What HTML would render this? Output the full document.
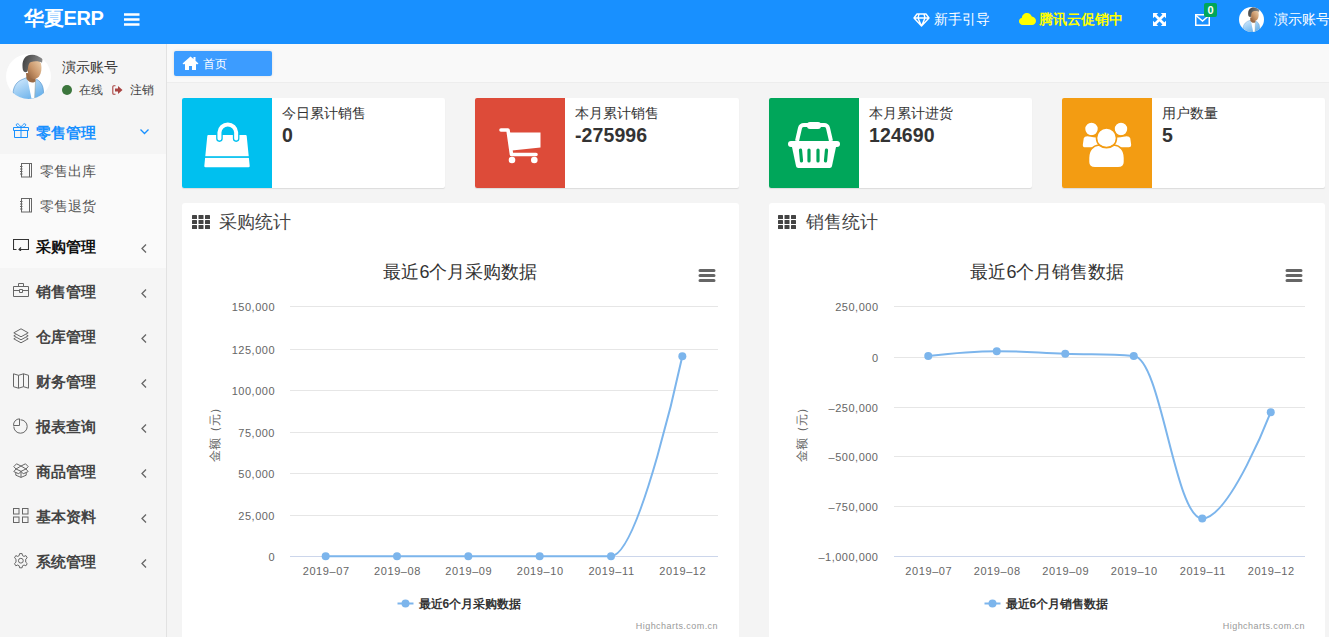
<!DOCTYPE html>
<html><head><meta charset="utf-8">
<style>
*{margin:0;padding:0;box-sizing:border-box}
html,body{width:1329px;height:637px;overflow:hidden;background:#f4f4f4;font-family:"Liberation Sans",sans-serif;color:#333}
.abs{position:absolute}
#hdr{position:absolute;left:0;top:0;width:1329px;height:44px;background:#1890ff}
#side{position:absolute;left:0;top:44px;width:167px;height:593px;background:#f5f5f5;border-right:1px solid #e2e2e2}
#tabs{position:absolute;left:167px;top:44px;width:1162px;height:39px;background:#f9f9f9;border-bottom:1px solid #ededed}
.txt{position:absolute;white-space:nowrap;line-height:1}
.box{position:absolute;top:98px;width:263px;height:90px;background:#fff;border-radius:2px;box-shadow:0 1px 1px rgba(0,0,0,0.1);overflow:hidden}
.box .ic{position:absolute;left:0;top:0;width:90px;height:90px}
.box .t{position:absolute;left:100px;top:106px;font-size:14px}
.panel{position:absolute;top:203px;background:#fff;border-radius:3px;height:440px}
svg text{font-family:"Liberation Sans",sans-serif}
.ay{font-size:11px;fill:#666;letter-spacing:0.5px}
.axx{font-size:11px;fill:#666;letter-spacing:0.6px}
.at{font-size:12px;fill:#666}
.ct{font-size:18px;fill:#333}
.lg{font-size:12px;font-weight:bold;fill:#333}
.cr{font-size:9px;fill:#999;letter-spacing:0.45px}
.mi{position:absolute;left:0;width:166px;height:45px}
.mi .lab{position:absolute;left:36px;top:16px;font-size:15px;font-weight:bold;color:#444;line-height:1;white-space:nowrap}
.mi span{line-height:0}
.mi .chev{position:absolute;left:141px;top:21px}
</style></head><body>
<div id="hdr">
  <div class="txt" style="left:24px;top:8px;font-size:20px;font-weight:bold;color:#fff;letter-spacing:-0.3px">华夏ERP</div>
  <svg class="abs" style="left:124px;top:13px" width="16" height="14"><path d="M0 1.5H15.5M0 6.5H15.5M0 11.5H15.5" stroke="#fff" stroke-width="2.5"/></svg>
  <svg class="abs" style="left:913px;top:13px" width="17" height="14" viewBox="0 0 17 14"><path d="M4 1H13L16 5L8.5 13L1 5Z M1 5H16 M6 1L5 5L8.5 13L12 5L11 1" fill="none" stroke="#fff" stroke-width="1.4" stroke-linejoin="round"/></svg>
  <div class="txt" style="left:934px;top:12px;font-size:14px;color:#fff">新手引导</div>
  <svg class="abs" style="left:1019px;top:12px" width="17" height="13" viewBox="0 0 17 13"><path d="M4 13C1.5 13 0 11.2 0 9.3C0 7.6 1.2 6.2 2.8 6C3 3 5.3 1 8 1C10.3 1 12.2 2.5 12.8 4.6C15.2 4.8 17 6.7 17 9C17 11.2 15.3 13 13 13Z" fill="#ffff00"/></svg>
  <div class="txt" style="left:1039px;top:12px;font-size:14px;font-weight:bold;color:#ffff00">腾讯云促销中</div>
  <svg class="abs" style="left:1153px;top:13px" width="13" height="13" viewBox="0 0 13 13"><path d="M0 0H5.2L0 5.2Z M13 0V5.2L7.8 0Z M0 13V7.8L5.2 13Z M13 13H7.8L13 7.8Z" fill="#fff"/><path d="M1.5 1.5L11.5 11.5M11.5 1.5L1.5 11.5" stroke="#fff" stroke-width="2.6"/></svg>
  <svg class="abs" style="left:1195px;top:13px" width="15" height="13" viewBox="0 0 15 13"><rect x="0.75" y="1.75" width="13.5" height="10.5" fill="none" stroke="#fff" stroke-width="1.5"/><path d="M1 2.5L7.5 8L14 2.5" fill="none" stroke="#fff" stroke-width="1.5"/></svg>
  <div class="abs" style="left:1204px;top:3px;width:13px;height:14px;background:#00a65a;border-radius:2px;color:#fff;font-size:11px;font-weight:bold;text-align:center;line-height:14px">0</div>
  <div class="abs" style="left:1239px;top:7px;width:25px;height:25px;border-radius:50%;background:#fff;overflow:hidden"><svg width="25" height="25" viewBox="0 0 45 45"><defs><linearGradient id="sh25" x1="0.2" y1="0.1" x2="0.8" y2="1"><stop offset="0" stop-color="#c8e4fb"/><stop offset="1" stop-color="#62ade9"/></linearGradient><linearGradient id="fc25" x1="1" y1="0" x2="0" y2="1"><stop offset="0" stop-color="#f0d3b0"/><stop offset="0.55" stop-color="#c9966a"/><stop offset="1" stop-color="#8d5d3a"/></linearGradient><linearGradient id="hr25" x1="0" y1="0" x2="1" y2="0.3"><stop offset="0" stop-color="#3a3a3a"/><stop offset="1" stop-color="#8a8a8a"/></linearGradient></defs><path d="M7 43C6.5 35 9 29 15 26L21 23.5L28 26.5L31 25.5C35.5 28 38 33 37.5 41C33 44 27 45.5 22 45.5C16 45.5 10 44.5 7 43Z" fill="url(#sh25)" stroke="#4f8fc8" stroke-width="0.6"/><path d="M21.5 25L29.5 26.5L28.6 44.8L25.5 44.8Z" fill="#fff"/><path d="M29.5 27L28.7 44.8" stroke="#9aa" stroke-width="0.7"/><path d="M20 19L29 19.5L29.6 27C27.5 29.5 23.5 29 20.5 25Z" fill="#9a6a45"/><ellipse cx="20.4" cy="14.5" rx="1.9" ry="2.6" fill="#b07a50"/><path d="M21.5 8C24 4.5 33 4.5 35 9.5C36 14 35.5 19 33 22.5C31 25 27 26 24.5 24C22 21.5 21 16 21.5 8Z" fill="url(#fc25)"/><path d="M16.8 15.5C15.8 9 17 3.2 22.5 1.2C28.5 -0.6 35 0.8 36.5 5.5L36 8.8C33.5 7 28.5 6.8 25 8C23 8.8 22.3 11 22 14L21.2 17.8C19 18.8 17.3 17.5 16.8 15.5Z" fill="url(#hr25)"/></svg></div>
  <div class="txt" style="left:1274px;top:12px;font-size:14px;color:#fff">演示账号</div>
</div>
<div id="side">
<div class="abs" style="left:6px;top:10px;width:45px;height:45px;border-radius:50%;background:#fff;overflow:hidden"><svg width="45" height="45" viewBox="0 0 45 45"><defs><linearGradient id="sh45" x1="0.2" y1="0.1" x2="0.8" y2="1"><stop offset="0" stop-color="#c8e4fb"/><stop offset="1" stop-color="#62ade9"/></linearGradient><linearGradient id="fc45" x1="1" y1="0" x2="0" y2="1"><stop offset="0" stop-color="#f0d3b0"/><stop offset="0.55" stop-color="#c9966a"/><stop offset="1" stop-color="#8d5d3a"/></linearGradient><linearGradient id="hr45" x1="0" y1="0" x2="1" y2="0.3"><stop offset="0" stop-color="#3a3a3a"/><stop offset="1" stop-color="#8a8a8a"/></linearGradient></defs><path d="M7 43C6.5 35 9 29 15 26L21 23.5L28 26.5L31 25.5C35.5 28 38 33 37.5 41C33 44 27 45.5 22 45.5C16 45.5 10 44.5 7 43Z" fill="url(#sh45)" stroke="#4f8fc8" stroke-width="0.6"/><path d="M21.5 25L29.5 26.5L28.6 44.8L25.5 44.8Z" fill="#fff"/><path d="M29.5 27L28.7 44.8" stroke="#9aa" stroke-width="0.7"/><path d="M20 19L29 19.5L29.6 27C27.5 29.5 23.5 29 20.5 25Z" fill="#9a6a45"/><ellipse cx="20.4" cy="14.5" rx="1.9" ry="2.6" fill="#b07a50"/><path d="M21.5 8C24 4.5 33 4.5 35 9.5C36 14 35.5 19 33 22.5C31 25 27 26 24.5 24C22 21.5 21 16 21.5 8Z" fill="url(#fc45)"/><path d="M16.8 15.5C15.8 9 17 3.2 22.5 1.2C28.5 -0.6 35 0.8 36.5 5.5L36 8.8C33.5 7 28.5 6.8 25 8C23 8.8 22.3 11 22 14L21.2 17.8C19 18.8 17.3 17.5 16.8 15.5Z" fill="url(#hr45)"/></svg></div>
<div class="txt" style="left:62px;top:16px;font-size:14px;color:#333">演示账号</div>
<div class="abs" style="left:62px;top:41px;width:10px;height:10px;border-radius:50%;background:#3c763d"></div>
<div class="txt" style="left:79px;top:40px;font-size:12px;color:#444">在线</div>
<svg class="abs" style="left:112px;top:41px" width="11" height="10" viewBox="0 0 11 10"><path d="M3.5 0.8H1.8Q0.8 0.8 0.8 1.8V8.2Q0.8 9.2 1.8 9.2H3.5" fill="none" stroke="#a94442" stroke-width="1.1"/><path d="M3 3.6H6V1L10.5 5L6 9V6.4H3Z" fill="#a94442"/></svg>
<div class="txt" style="left:130px;top:40px;font-size:12px;color:#444">注销</div>
<div class="mi" style="top:65px"><span style="position:absolute;left:13px;top:14px"><svg width="16" height="16" viewBox="0 0 16 16"><g fill="none" stroke="#1890ff" stroke-width="1"><path d="M0.5 4.5H15.5V7.5H0.5Z"/><path d="M1.5 7.5V14.5H14.5V7.5"/><path d="M8 4.5V14.5"/><path d="M8 4.5C6.5 1.5 4.5 0 3.5 1.2C2.6 2.4 4 4.2 8 4.5C12 4.2 13.4 2.4 12.5 1.2C11.5 0 9.5 1.5 8 4.5"/></g></svg></span><div class="lab" style="color:#1890ff;top:16px">零售管理</div><svg style="position:absolute;left:140px;top:20px" width="9" height="6" viewBox="0 0 9 6"><path d="M0.5 0.5L4.5 4.5L8.5 0.5" fill="none" stroke="#1890ff" stroke-width="1.3"/></svg></div>
<div class="abs" style="left:0;top:110px;width:166px;height:114px;background:#fafafa"></div>
<span class="abs" style="left:20px;top:119px"><svg width="12" height="15" viewBox="0 0 12 15"><g fill="none" stroke="#666" stroke-width="1"><rect x="1.5" y="0.5" width="10" height="13.5"/><path d="M9.5 0.5V14"/><path d="M0 3.5H2.5M0 6H2.5M0 8.5H2.5M0 11H2.5"/></g></svg></span><div class="txt" style="left:40px;top:120px;font-size:14px;color:#555">零售出库</div>
<span class="abs" style="left:20px;top:154px"><svg width="12" height="15" viewBox="0 0 12 15"><g fill="none" stroke="#666" stroke-width="1"><rect x="1.5" y="0.5" width="10" height="13.5"/><path d="M9.5 0.5V14"/><path d="M0 3.5H2.5M0 6H2.5M0 8.5H2.5M0 11H2.5"/></g></svg></span><div class="txt" style="left:40px;top:155px;font-size:14px;color:#555">零售退货</div>
<div class="mi" style="top:179px"><span style="position:absolute;left:13px;top:16px"><svg width="16" height="12" viewBox="0 0 16 12"><path d="M3.5 10.5H0.5V0.5H15.5V10.5H6M8 8.5L6 10.5L8 12" fill="none" stroke="#333" stroke-width="1.1"/></svg></span><div class="lab" style="color:#111">采购管理</div><svg class="chev" width="6" height="9" viewBox="0 0 6 9"><path d="M5 0.5L1 4.5L5 8.5" fill="none" stroke="#666" stroke-width="1.3"/></svg></div>
<div class="mi" style="top:224px"><span style="position:absolute;left:13px;top:15px"><svg width="16" height="15" viewBox="0 0 16 15"><g fill="none" stroke="#666" stroke-width="1"><path d="M0.5 3.5H15.5V13.5H0.5Z"/><path d="M5.5 3.5V0.5H10.5V3.5"/><path d="M0.5 7.5H6.5M9.5 7.5H15.5"/><path d="M6.5 6.5H9.5V9.5H6.5Z"/></g></svg></span><div class="lab" style="color:#444">销售管理</div><svg class="chev" width="6" height="9" viewBox="0 0 6 9"><path d="M5 0.5L1 4.5L5 8.5" fill="none" stroke="#666" stroke-width="1.3"/></svg></div>
<div class="mi" style="top:269px"><span style="position:absolute;left:13px;top:15px"><svg width="16" height="16" viewBox="0 0 16 16"><g fill="none" stroke="#666" stroke-width="1" stroke-linejoin="round"><path d="M8 0.8L15.2 4.8L8 8.8L0.8 4.8Z"/><path d="M2.6 6.8L0.8 7.8L8 11.8L15.2 7.8L13.4 6.8"/><path d="M2.6 9.8L0.8 10.8L8 14.8L15.2 10.8L13.4 9.8"/></g></svg></span><div class="lab" style="color:#444">仓库管理</div><svg class="chev" width="6" height="9" viewBox="0 0 6 9"><path d="M5 0.5L1 4.5L5 8.5" fill="none" stroke="#666" stroke-width="1.3"/></svg></div>
<div class="mi" style="top:314px"><span style="position:absolute;left:13px;top:15px"><svg width="16" height="16" viewBox="0 0 16 16"><g fill="none" stroke="#666" stroke-width="1" stroke-linejoin="round"><path d="M0.5 0.8L5.5 2.3L10.5 0.8L15.5 2.3V15.2L10.5 13.7L5.5 15.2L0.5 13.7Z"/><path d="M5.5 2.3V15.2M10.5 0.8V13.7"/></g></svg></span><div class="lab" style="color:#444">财务管理</div><svg class="chev" width="6" height="9" viewBox="0 0 6 9"><path d="M5 0.5L1 4.5L5 8.5" fill="none" stroke="#666" stroke-width="1.3"/></svg></div>
<div class="mi" style="top:359px"><span style="position:absolute;left:13px;top:15px"><svg width="16" height="16" viewBox="0 0 16 16"><g fill="none" stroke="#666" stroke-width="1"><path d="M7.5 1.8A6.7 6.7 0 1 1 0.8 8.5"/><path d="M6.5 0.8V7.5H0.5A6.3 6.3 0 0 1 6.5 0.8Z"/></g></svg></span><div class="lab" style="color:#444">报表查询</div><svg class="chev" width="6" height="9" viewBox="0 0 6 9"><path d="M5 0.5L1 4.5L5 8.5" fill="none" stroke="#666" stroke-width="1.3"/></svg></div>
<div class="mi" style="top:404px"><span style="position:absolute;left:13px;top:15px"><svg width="16" height="15" viewBox="0 0 16 15"><g fill="none" stroke="#666" stroke-width="1" stroke-linejoin="round"><path d="M8 3L3.5 0.8L0.8 3.6L3 6L0.8 8.6L5.8 10.8L8 8.3L10.2 10.8L15.2 8.6L13 6L15.2 3.6L12.5 0.8Z"/><path d="M3 6L8 8.3L13 6L8 3Z"/><path d="M2.8 9.6V12.2L8 14.4L13.2 12.2V9.6M8 8.3V14.4"/></g></svg></span><div class="lab" style="color:#444">商品管理</div><svg class="chev" width="6" height="9" viewBox="0 0 6 9"><path d="M5 0.5L1 4.5L5 8.5" fill="none" stroke="#666" stroke-width="1.3"/></svg></div>
<div class="mi" style="top:449px"><span style="position:absolute;left:13px;top:15px"><svg width="16" height="16" viewBox="0 0 16 16"><g fill="none" stroke="#666" stroke-width="1"><rect x="0.5" y="0.5" width="5.5" height="5.5"/><rect x="9.5" y="0.5" width="5.5" height="5.5"/><rect x="0.5" y="9" width="5.5" height="5.5"/><rect x="9.5" y="9" width="5.5" height="5.5"/></g></svg></span><div class="lab" style="color:#444">基本资料</div><svg class="chev" width="6" height="9" viewBox="0 0 6 9"><path d="M5 0.5L1 4.5L5 8.5" fill="none" stroke="#666" stroke-width="1.3"/></svg></div>
<div class="mi" style="top:494px"><span style="position:absolute;left:13px;top:15px"><svg width="16" height="16" viewBox="0 0 16 16"><g fill="none" stroke="#666" stroke-width="1" stroke-linejoin="round"><path d="M6.6 0.6H9.1L9.5 2.6L11 3.4L12.9 2.6L14.2 4.8L12.7 6.2V9.2L14.2 10.6L12.9 12.8L11 12L9.5 12.8L9.1 14.8H6.6L6.2 12.8L4.7 12L2.8 12.8L1.5 10.6L3 9.2V6.2L1.5 4.8L2.8 2.6L4.7 3.4L6.2 2.6Z"/><circle cx="7.85" cy="7.7" r="2.4"/></g></svg></span><div class="lab" style="color:#444">系统管理</div><svg class="chev" width="6" height="9" viewBox="0 0 6 9"><path d="M5 0.5L1 4.5L5 8.5" fill="none" stroke="#666" stroke-width="1.3"/></svg></div>
</div>
<div id="tabs">
  <div class="abs" style="left:7px;top:7px;width:98px;height:25px;background:#3c9cff;border-radius:2px;box-shadow:0 0 3px rgba(0,0,0,0.12)"></div>
  <svg class="abs" style="left:15px;top:12px" width="17" height="14" viewBox="0 0 17 14"><path d="M8.5 0.5L0.5 7.5L2 8.5L3 7.7V14H7V10H10V14H14V7.7L15 8.5L16.5 7.5L13.5 4.8V1H11.5V3L8.5 0.5Z" fill="#fff"/></svg>
  <div class="txt" style="left:36px;top:14px;font-size:12px;color:#fff">首页</div>
</div>
<div class="box" style="left:182px;width:263px"><div class="ic" style="background:#00c0ef"><span class="abs" style="left:21.5px;top:24px;line-height:0"><svg width="46" height="46" viewBox="0 0 46 46"><path d="M4.3 13H41.7Q42.6 13 42.7 14L45.7 44Q45.8 45.3 44.5 45.3H1.5Q0.2 45.3 0.3 44L3.3 14Q3.4 13 4.3 13Z" fill="#fff"/><rect x="0" y="34.2" width="46" height="1.7" fill="#00c0ef"/><path d="M15.45 16.6V10.36A8.36 8.36 0 0 1 32.15 10.36V16.6" fill="none" stroke="#00c0ef" stroke-width="6.6" stroke-linecap="round"/><path d="M15.45 16.6V10.36A8.36 8.36 0 0 1 32.15 10.36V16.6" fill="none" stroke="#fff" stroke-width="4" stroke-linecap="round"/></svg></span></div><div class="txt" style="left:100px;top:8px;font-size:14px;color:#333">今日累计销售</div><div class="txt" style="left:100px;top:28px;font-size:19.5px;letter-spacing:0.1px;font-weight:bold;color:#333">0</div></div>
<div class="box" style="left:475px;width:264px"><div class="ic" style="background:#dd4b39"><span class="abs" style="left:24px;top:30px;line-height:0"><svg width="42" height="36" viewBox="0 0 42 36"><path d="M2 2H9L12.5 26.5H37" fill="none" stroke="#fff" stroke-width="3.6" stroke-linecap="round" stroke-linejoin="round"/><path d="M10 4.5H41.5V19.5L13 22.5Z" fill="#fff"/><circle cx="13" cy="32" r="3.3" fill="#fff"/><circle cx="35.3" cy="32" r="3.3" fill="#fff"/></svg></span></div><div class="txt" style="left:100px;top:8px;font-size:14px;color:#333">本月累计销售</div><div class="txt" style="left:100px;top:28px;font-size:19.5px;letter-spacing:0.1px;font-weight:bold;color:#333">-275996</div></div>
<div class="box" style="left:769px;width:263px"><div class="ic" style="background:#00a65a"><span class="abs" style="left:19px;top:24px;line-height:0"><svg width="52" height="46" viewBox="0 0 52 46"><path d="M9 19L12 6C12.5 4 14 3 16 3H36C38 3 39.5 4 40 6L43 19" fill="none" stroke="#fff" stroke-width="4"/><rect x="19" y="0" width="14" height="7" rx="3" fill="#fff"/><rect x="0" y="19" width="52" height="6" rx="3" fill="#fff"/><path d="M4 25H48L44 44C43.7 45.3 43 46 41.5 46H10.5C9 46 8.3 45.3 8 44Z" fill="#fff"/><g stroke="#00a65a" stroke-width="3.2" stroke-linecap="round"><path d="M12.5 28L13.5 39M21 28V39M30 28V39M38.5 28L37.5 39"/></g></svg></span></div><div class="txt" style="left:100px;top:8px;font-size:14px;color:#333">本月累计进货</div><div class="txt" style="left:100px;top:28px;font-size:19.5px;letter-spacing:0.1px;font-weight:bold;color:#333">124690</div></div>
<div class="box" style="left:1062px;width:263px"><div class="ic" style="background:#f39c12"><span class="abs" style="left:20px;top:24px;line-height:0"><svg width="50" height="46" viewBox="0 0 50 46"><g fill="#fff" stroke="#f39c12" stroke-width="1.6"><circle cx="9.5" cy="7" r="7"/><circle cx="39" cy="7" r="7"/><path d="M1 16C2 13 5 13 9 14C12 15 16 15 20 14V26H3C1 26 0 25 0 23Z"/><path d="M49 16C48 13 45 13 41 14C38 15 34 15 30 14V26H47C49 26 50 25 50 23Z"/><circle cx="24.5" cy="16" r="10"/><path d="M6.5 36C6.5 28 11 23.5 17 23C21.5 26.5 27.5 26.5 32 23C38 23.5 42.5 28 42.5 36V40C42.5 44 40 45.8 36 45.8H13C9 45.8 6.5 44 6.5 40Z"/></g></svg></span></div><div class="txt" style="left:100px;top:8px;font-size:14px;color:#333">用户数量</div><div class="txt" style="left:100px;top:28px;font-size:19.5px;letter-spacing:0.1px;font-weight:bold;color:#333">5</div></div>
<div class="panel" style="left:182px;width:557px"></div>
<div class="panel" style="left:769px;width:556px"></div>
<div class="abs" style="left:192px;top:215px;width:18px;height:14px"><svg width="18" height="14" viewBox="0 0 18 14"><rect x="0.0" y="0" width="5" height="4" rx="0.6" fill="#444"/><rect x="0.0" y="5" width="5" height="4" rx="0.6" fill="#444"/><rect x="0.0" y="10" width="5" height="4" rx="0.6" fill="#444"/><rect x="6.5" y="0" width="5" height="4" rx="0.6" fill="#444"/><rect x="6.5" y="5" width="5" height="4" rx="0.6" fill="#444"/><rect x="6.5" y="10" width="5" height="4" rx="0.6" fill="#444"/><rect x="13.0" y="0" width="5" height="4" rx="0.6" fill="#444"/><rect x="13.0" y="5" width="5" height="4" rx="0.6" fill="#444"/><rect x="13.0" y="10" width="5" height="4" rx="0.6" fill="#444"/></svg></div>
<div class="txt" style="left:219px;top:213px;font-size:18px;color:#444">采购统计</div>
<div class="abs" style="left:778px;top:215px;width:18px;height:14px"><svg width="18" height="14" viewBox="0 0 18 14"><rect x="0.0" y="0" width="5" height="4" rx="0.6" fill="#444"/><rect x="0.0" y="5" width="5" height="4" rx="0.6" fill="#444"/><rect x="0.0" y="10" width="5" height="4" rx="0.6" fill="#444"/><rect x="6.5" y="0" width="5" height="4" rx="0.6" fill="#444"/><rect x="6.5" y="5" width="5" height="4" rx="0.6" fill="#444"/><rect x="6.5" y="10" width="5" height="4" rx="0.6" fill="#444"/><rect x="13.0" y="0" width="5" height="4" rx="0.6" fill="#444"/><rect x="13.0" y="5" width="5" height="4" rx="0.6" fill="#444"/><rect x="13.0" y="10" width="5" height="4" rx="0.6" fill="#444"/></svg></div>
<div class="txt" style="left:806px;top:213px;font-size:18px;color:#444">销售统计</div>
<svg class="abs" style="left:0;top:0" width="1329" height="637">
<path d="M 290 306.5 L 718 306.5" stroke="#e6e6e6" stroke-width="1"/>
<path d="M 290 349.5 L 718 349.5" stroke="#e6e6e6" stroke-width="1"/>
<path d="M 290 390.5 L 718 390.5" stroke="#e6e6e6" stroke-width="1"/>
<path d="M 290 432.5 L 718 432.5" stroke="#e6e6e6" stroke-width="1"/>
<path d="M 290 473.5 L 718 473.5" stroke="#e6e6e6" stroke-width="1"/>
<path d="M 290 515.5 L 718 515.5" stroke="#e6e6e6" stroke-width="1"/>
<path d="M 290 556.5 L 718 556.5" stroke="#ccd6eb" stroke-width="1"/>
<text x="275.0" y="310.5" text-anchor="end" class="ay">150,000</text>
<text x="275.0" y="353.5" text-anchor="end" class="ay">125,000</text>
<text x="275.0" y="394.5" text-anchor="end" class="ay">100,000</text>
<text x="275.0" y="436.5" text-anchor="end" class="ay">75,000</text>
<text x="275.0" y="477.5" text-anchor="end" class="ay">50,000</text>
<text x="275.0" y="519.5" text-anchor="end" class="ay">25,000</text>
<text x="275.0" y="560.5" text-anchor="end" class="ay">0</text>
<text x="326.2" y="575" text-anchor="middle" class="axx">2019–07</text>
<text x="397.5" y="575" text-anchor="middle" class="axx">2019–08</text>
<text x="468.8" y="575" text-anchor="middle" class="axx">2019–09</text>
<text x="540.2" y="575" text-anchor="middle" class="axx">2019–10</text>
<text x="611.5" y="575" text-anchor="middle" class="axx">2019–11</text>
<text x="682.8" y="575" text-anchor="middle" class="axx">2019–12</text>
<path d="M 325.67 556.20 C 325.67 556.20 368.47 556.20 397.00 556.20 C 425.53 556.20 439.80 556.20 468.33 556.20 C 496.87 556.20 511.13 556.20 539.67 556.20 C 568.20 556.20 582.47 556.20 611.00 556.20 C 639.53 556.20 682.33 356.28 682.33 356.28" stroke="#7cb5ec" stroke-width="2" fill="none"/>
<circle cx="325.67" cy="556.20" r="4" fill="#7cb5ec"/>
<circle cx="397.00" cy="556.20" r="4" fill="#7cb5ec"/>
<circle cx="468.33" cy="556.20" r="4" fill="#7cb5ec"/>
<circle cx="539.67" cy="556.20" r="4" fill="#7cb5ec"/>
<circle cx="611.00" cy="556.20" r="4" fill="#7cb5ec"/>
<circle cx="682.33" cy="356.28" r="4" fill="#7cb5ec"/>
<text x="219" y="432" transform="rotate(-90 219 432)" text-anchor="middle" class="at">金额（元）</text>
<text x="460.5" y="278" text-anchor="middle" class="ct">最近6个月采购数据</text>
<path d="M 700 270.5 L 714 270.5 M 700 275.5 L 714 275.5 M 700 280.5 L 714 280.5" stroke="#666" stroke-width="3" stroke-linecap="round"/>
<path d="M 397.5 603.5 L 413.5 603.5" stroke="#7cb5ec" stroke-width="2"/><circle cx="405.5" cy="603.5" r="4" fill="#7cb5ec"/>
<text x="418.5" y="608" class="lg">最近6个月采购数据</text>
<text x="718" y="629" text-anchor="end" class="cr">Highcharts.com.cn</text>
<path d="M 894 306.5 L 1305 306.5" stroke="#e6e6e6" stroke-width="1"/>
<path d="M 894 357.5 L 1305 357.5" stroke="#e6e6e6" stroke-width="1"/>
<path d="M 894 407.5 L 1305 407.5" stroke="#e6e6e6" stroke-width="1"/>
<path d="M 894 456.5 L 1305 456.5" stroke="#e6e6e6" stroke-width="1"/>
<path d="M 894 506.5 L 1305 506.5" stroke="#e6e6e6" stroke-width="1"/>
<path d="M 894 556.5 L 1305 556.5" stroke="#ccd6eb" stroke-width="1"/>
<text x="878.5" y="310.5" text-anchor="end" class="ay">250,000</text>
<text x="878.5" y="361.5" text-anchor="end" class="ay">0</text>
<text x="878.5" y="411.5" text-anchor="end" class="ay">–250,000</text>
<text x="878.5" y="460.5" text-anchor="end" class="ay">–500,000</text>
<text x="878.5" y="510.5" text-anchor="end" class="ay">–750,000</text>
<text x="878.5" y="560.5" text-anchor="end" class="ay">–1,000,000</text>
<text x="928.8" y="575" text-anchor="middle" class="axx">2019–07</text>
<text x="997.2" y="575" text-anchor="middle" class="axx">2019–08</text>
<text x="1065.8" y="575" text-anchor="middle" class="axx">2019–09</text>
<text x="1134.2" y="575" text-anchor="middle" class="axx">2019–10</text>
<text x="1202.8" y="575" text-anchor="middle" class="axx">2019–11</text>
<text x="1271.2" y="575" text-anchor="middle" class="axx">2019–12</text>
<path d="M 928.25 356.00 C 928.25 356.00 969.35 351.20 996.75 351.20 C 1024.15 351.20 1037.85 352.84 1065.25 353.80 C 1092.65 354.76 1106.35 353.80 1133.75 356.00 C 1161.15 358.20 1174.85 518.50 1202.25 518.50 C 1229.65 518.50 1270.75 412.20 1270.75 412.20" stroke="#7cb5ec" stroke-width="2" fill="none"/>
<circle cx="928.25" cy="356.00" r="4" fill="#7cb5ec"/>
<circle cx="996.75" cy="351.20" r="4" fill="#7cb5ec"/>
<circle cx="1065.25" cy="353.80" r="4" fill="#7cb5ec"/>
<circle cx="1133.75" cy="356.00" r="4" fill="#7cb5ec"/>
<circle cx="1202.25" cy="518.50" r="4" fill="#7cb5ec"/>
<circle cx="1270.75" cy="412.20" r="4" fill="#7cb5ec"/>
<text x="806" y="432" transform="rotate(-90 806 432)" text-anchor="middle" class="at">金额（元）</text>
<text x="1047.5" y="278" text-anchor="middle" class="ct">最近6个月销售数据</text>
<path d="M 1287 270.5 L 1301 270.5 M 1287 275.5 L 1301 275.5 M 1287 280.5 L 1301 280.5" stroke="#666" stroke-width="3" stroke-linecap="round"/>
<path d="M 984.5 603.5 L 1000.5 603.5" stroke="#7cb5ec" stroke-width="2"/><circle cx="992.5" cy="603.5" r="4" fill="#7cb5ec"/>
<text x="1005.5" y="608" class="lg">最近6个月销售数据</text>
<text x="1305" y="629" text-anchor="end" class="cr">Highcharts.com.cn</text>
</svg>
</body></html>
